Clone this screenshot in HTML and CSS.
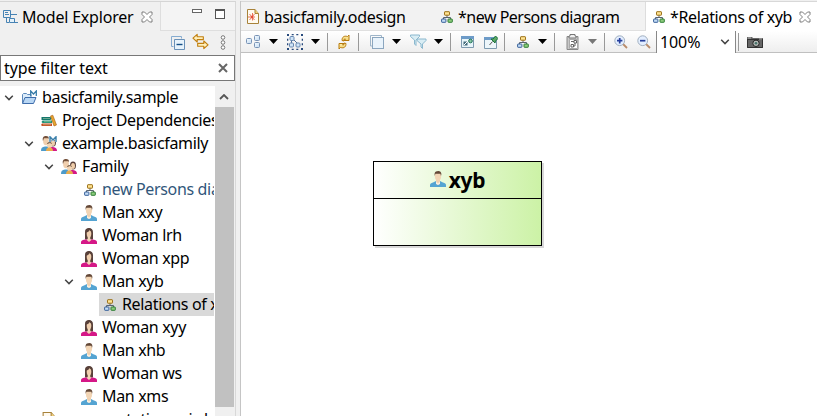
FILE: index.html
```
<!DOCTYPE html>
<html lang="en">
<head>
<meta charset="utf-8">
<title>Model Explorer</title>
<link rel="stylesheet" href="styles.css">
</head>
<body>
<svg class="defs" aria-hidden="true">
  <defs>
    <linearGradient id="blue" x1="0" y1="0" x2="1" y2="1"><stop offset="0" stop-color="#f5fbff"/><stop offset="1" stop-color="#c3dbf2"/></linearGradient>
    <linearGradient id="gold" x1="0" y1="0" x2="0" y2="1"><stop offset="0" stop-color="#fff3b5"/><stop offset="1" stop-color="#f3cf66"/></linearGradient>
  </defs>
  <symbol id="explorer" viewBox="0 0 16 16"><path d="M1.500 1.500h7v7h-7zM3 3.500h3M3 5.500h4M4.500 8.500v5H7M9 5.500h6" fill="none" stroke="#4783b4"/><path d="M7.500 9.500h5v4h-5zM12 13.500h4" fill="#e4f2fb" stroke="#4783b4"/></symbol>
  <symbol id="close" viewBox="0 0 12 12"><path d="M1 1h2.500L6 3.500 8.500 1H11v2.500L8.500 6 11 8.500V11H8.500L6 8.500 3.500 11H1V8.500L3.500 6 1 3.500z" fill="#fff" stroke="#707070" stroke-width=".9"/></symbol>
  <symbol id="collapse" viewBox="0 0 14 14"><path d="M.5 10.500V.5h10v2M.5 10.500h2" fill="none" stroke="#86acd0"/><path d="M3.500 3.500h10v10h-10z" fill="#e7f3fc" stroke="#6a91b8"/><path d="M5.500 8.500h6" stroke="#164f87" stroke-width="1.400"/></symbol>
  <symbol id="link" viewBox="0 0 18 18"><path d="M1 5.500 5.500 1.500V4H12v3H5.500v2.500zM17 12.500 12.500 8.500V11H6v3h6.500v2.500z" fill="#fff1bd" stroke="#c17f10" stroke-width="1.200" stroke-linejoin="round"/></symbol>
  <symbol id="dots" viewBox="0 0 6 15"><g fill="#fff" stroke="#777"><circle cx="3" cy="2.500" r="1.800"/><circle cx="3" cy="7.500" r="1.800"/><circle cx="3" cy="12.500" r="1.800"/></g></symbol>
  <symbol id="chev" viewBox="0 0 10 6"><path d="M1.200 .8 5 4.600 8.800 .8" fill="none" stroke="#444" stroke-width="1.500"/></symbol>
  <symbol id="project" viewBox="0 0 16 16"><path d="M1.500 13V4.500l1-1h3l1 1H10V8" fill="#dcecf9" stroke="#5c89bb"/><path d="M1.500 13.500 4 7.500h11l-2.500 6z" fill="#b9d7f4" stroke="#3f6dab"/><path d="M9.700 6V1l2.800 3 2.800-3v5" fill="none" stroke="#397da8" stroke-width="1.300"/></symbol>
  <symbol id="books" viewBox="0 0 16 16"><path d="M.5 4h9l1 1.500-1 1.500h-9z" fill="#15766c"/><path d="M1.500 7.500H11V10H1.500L.5 9z" fill="#1f9278"/><path d="M1 10.500h10V13H1l-1-1z" fill="#c94d21"/><path d="M2 5.500h7M3 8.700h7M2 11.700h8" stroke="#c5dcb1" stroke-width=".5"/><path d="m9.500 3 2.300-.8L15.500 12l-2.500 1z" fill="#e6a72d" stroke="#a55b17" stroke-width=".6"/></symbol>
  <symbol id="man" viewBox="0 0 16 16"><path d="M0 16v-2c0-1.300 1-2 3-2.500L6 10h4l3 1.500c2 .5 3 1.200 3 2.500v2z" fill="#55a4d2"/><path d="M6 8h4v2.500L8 14l-2-3.500z" fill="#efd0af"/><ellipse cx="8" cy="5.200" rx="3.100" ry="4.300" fill="#f2d5b5"/><path d="M4.600 5V2.500C5 .7 6.500 0 8.300 0c1.900 0 2.900 1.200 3.100 3L11 5l-.6-2.300H5.500z" fill="#634736"/><path d="m6 10.500 2 2 2-2V13l-2 1-2-1z" fill="#fff1df"/></symbol>
  <symbol id="woman" viewBox="0 0 16 16"><path d="M4 11.500V4C4 1 5.500 0 8 0s4 1.500 4 4.500v7z" fill="#59413a"/><path d="M0 16v-2c0-1.500 2-2.500 5-2.500h6c3 0 5 1 5 2.500v2z" fill="#d51887"/><ellipse cx="8" cy="5.700" rx="2.300" ry="3.600" fill="#f0cfae"/><path d="M6.700 8h2.600v3l1 1L8 14l-2.300-2 1-1z" fill="#f2d5b5"/><path d="M5 4.500c2 0 3-1 3.500-2.500L11 4.500V2L8 0 5 2z" fill="#59413a"/></symbol>
  <symbol id="family" viewBox="0 0 16 16"><path d="M0 15c0-3 1-4 4-4.500h3l2 4.500z" fill="#4d9bca"/><path d="M8 15v-4h4c3 .5 4 1.500 4 4z" fill="#d51887"/><ellipse cx="5" cy="5" rx="2.900" ry="4.200" fill="#f0cfae"/><path d="M2 5C1 1 3 0 5 0s3.500 1 2.800 3L7 2.200H3z" fill="#74513b"/><ellipse cx="12" cy="6.500" rx="3" ry="4" fill="#59413a"/><ellipse cx="12" cy="7" rx="2" ry="3" fill="#efcda9"/><ellipse cx="8.500" cy="9" rx="2.500" ry="3" fill="#f2d5b5"/><path d="M6 8c0-2.500 5-2.500 5 0L9 7z" fill="#654c3b"/><path d="M5 15c0-2.500 1.500-3.500 3.500-3.500S12 12.500 12 15z" fill="#e9ad4d"/></symbol>
  <symbol id="familym" viewBox="0 0 16 16"><use href="#family" width="16" height="16"/><path d="M9 6V.8L12 4l3-3.200V6" fill="none" stroke="#dcecf4" stroke-width="2.500"/><path d="M9 6V.8L12 4l3-3.200V6" fill="none" stroke="#397da8" stroke-width="1.300"/></symbol>
  <symbol id="diagram" viewBox="0 0 12 12"><path d="M6 4v2.500M2.500 8V6.500h7V8" fill="none" stroke="#59636d"/><rect x="3.500" y=".7" width="5" height="3.500" rx=".5" fill="#ffe391" stroke="#9b7018"/><rect x=".6" y="8" width="4.300" height="3.300" rx=".5" fill="#c4dcf5" stroke="#365f99"/><rect x="7" y="8" width="4.300" height="3.300" rx=".5" fill="#8ecc7d" stroke="#2d7d34"/></symbol>
  <symbol id="file" viewBox="0 0 12 15"><path d="M.5.5h7.500l3.500 4v10H.5z" fill="#fffaf0" stroke="#a88239"/><path d="M8 .5v4h3.500" fill="#f3d27d" stroke="#a88239"/></symbol>
  <symbol id="odesign" viewBox="0 0 12 15"><use href="#file" width="12" height="15"/><path d="M1 8h7M5.500 4v7.500M2.500 5l5 6M7.500 5l-5 6" stroke="#ea715b" stroke-width="1"/><circle cx="5" cy="8" r="1.300" fill="#e44c37"/></symbol>
  <symbol id="arrange" viewBox="0 0 16 14"><g fill="url(#blue)" stroke="#7893b5"><rect x=".5" y="3.500" width="5" height="5" rx="1"/><rect x="8.500" y=".5" width="5" height="5" rx="1"/><rect x="8.500" y="7.500" width="5" height="5" rx="1"/></g></symbol>
  <symbol id="select" viewBox="0 0 16 16"><g fill="#284a7c"><path d="M0 0h2v2H0zM4.700 0h2v1.300h-2zM9.300 0h2v1.300h-2zM14 0h2v2h-2zM0 4.700h1.300v2H0zM14.700 4.700H16v2h-1.300zM0 9.300h1.300v2H0zM14.700 9.300H16v2h-1.300zM0 14h2v2H0zM4.700 14.700h2V16h-2zM9.300 14.700h2V16h-2zM14 14h2v2h-2z"/></g><path d="m5 4 7 7M4.500 5v6" stroke="#527198"/><g fill="#cfe4f7" stroke="#6888b0"><rect x="3" y="2.500" width="4" height="4" rx="1"/><rect x="2.500" y="9" width="4" height="4" rx="1"/><rect x="9" y="9" width="4" height="4" rx="1"/></g></symbol>
  <symbol id="refresh" viewBox="0 0 16 16"><path d="M6 6.500C6 3 8 1.500 11.500 2.500L13 1v5.500H8L9.500 5C8.500 4.500 8 5 8 7z" fill="url(#gold)" stroke="#b77a0d" stroke-linejoin="round"/><path d="M10 9.500c0 3.500-2 5-5.500 4L3 15V9.500h5L6.500 11C7.500 11.500 8 11 8 9z" fill="url(#gold)" stroke="#b77a0d" stroke-linejoin="round"/></symbol>
  <symbol id="layers" viewBox="0 0 14 14"><path d="M.5 11V.5h11v2M.5 11h2" fill="none" stroke="#9eb5c9"/><rect x="2.500" y="2.500" width="11" height="11" fill="#e9f3fb" stroke="#8ba6bf"/></symbol>
  <symbol id="filter" viewBox="0 0 17 15"><g fill="#d9edf4" stroke="#8bb8ce"><path d="M.5 1h9v1.500L6 6v5.500L4.500 10V6L.5 2.500z"/><path d="M7 5h9v1.500L12.500 10v4.500L11 13v-3L7 6.500z"/></g></symbol>
  <symbol id="image" viewBox="0 0 13 12"><path d="M.5 1.500h12v10H.5z" fill="#e8f5fa" stroke="#7d9aaf"/><path d="M0 0h13v3H0z" fill="#6d9bc8"/><path d="M2.500 5.500h4v4h-4z" fill="#426a7a"/><path d="m3 9 4-4" stroke="#fff"/><circle cx="9.500" cy="5" r="1.800" fill="#8bc8a4" stroke="#1e7057"/></symbol>
  <symbol id="pin" viewBox="0 0 14 14"><path d="M.5 3.500h12v10H.5z" fill="#edf6fa" stroke="#7d9aaf"/><path d="M0 2h13v3H0z" fill="#6d9bc8"/><path d="m5.500 10 3-3.500" stroke="#555"/><path d="m7 4 4 4 .5-2L14 3.500 11.500 1 9 4z" fill="#5ca765" stroke="#19733b"/></symbol>
  <symbol id="paste" viewBox="0 0 13 16"><path d="M1 2.500h11v13H1z" fill="#c7c7c7" stroke="#888"/><path d="M4 2V.5h5V2h1v2H3V2z" fill="#eee" stroke="#777"/><path d="M3.500 5.500h8v9h-8z" fill="#fff" stroke="#aaa"/><path d="M5 10.500h2.500V13H5zM8 6.500h2.500V9H8zM5 7.500h3M9 9v3H7.500" fill="none" stroke="#666"/></symbol>
  <symbol id="plus" viewBox="0 0 14 14"><path d="m9 9 4 4" stroke="#b98b69" stroke-width="1.800"/><circle cx="5.700" cy="5.700" r="4.900" fill="#e3eeff" stroke="#a1afbf"/><path d="M3 5.700h5.400M5.700 3v5.400" stroke="#263f9c" stroke-width="1.700"/></symbol>
  <symbol id="minus" viewBox="0 0 14 14"><path d="m9 9 4 4" stroke="#b98b69" stroke-width="1.800"/><circle cx="5.700" cy="5.700" r="4.900" fill="#e3eeff" stroke="#a1afbf"/><path d="M3 5.700h5.400" stroke="#263f9c" stroke-width="1.700"/></symbol>
  <symbol id="camera" viewBox="0 0 16 12"><path d="M0 1h5l1 1h10v10H0z" fill="#666"/><path d="M0 3.500h16M.5 3v8.500h15V3" fill="none" stroke="#333"/><path d="M1 2h3M12 3h3" stroke="#b5b5b5"/><circle cx="9" cy="7.300" r="3.200" fill="#b5bab7" stroke="#222"/><circle cx="9" cy="7.300" r="1.300" fill="#477269"/></symbol>
</svg>

<main class="workbench">
  <aside class="explorer">
    <header class="view-tabs">
      <div class="view-tab"><svg class="i16"><use href="#explorer"/></svg><span class="view-title">Model Explorer</span><svg class="close"><use href="#close"/></svg></div>
      <div class="window-buttons"><i class="minimize"></i><i class="maximize"></i></div>
    </header>
    <div class="view-tools"><svg class="collapse"><use href="#collapse"/></svg><svg class="link"><use href="#link"/></svg><svg class="dots"><use href="#dots"/></svg></div>
    <div class="search"><span>type filter text</span><svg class="clear" viewBox="0 0 10 10"><path d="m1 1 8 8M9 1 1 9" stroke="#666" stroke-width="2"/></svg></div>
    <div class="tree-area">
      <div class="tree">
        <div class="row l0"><svg class="chev"><use href="#chev"/></svg><svg class="i16"><use href="#project"/></svg><span>basicfamily.sample</span></div>
        <div class="row l1"><i class="chev"></i><svg class="i16"><use href="#books"/></svg><span>Project Dependencies</span></div>
        <div class="row l1"><svg class="chev"><use href="#chev"/></svg><svg class="i16"><use href="#familym"/></svg><span>example.basicfamily</span></div>
        <div class="row l2"><svg class="chev"><use href="#chev"/></svg><svg class="i16"><use href="#family"/></svg><span>Family</span></div>
        <div class="row l3 representation"><i class="chev"></i><svg class="i16 small"><use href="#diagram"/></svg><span>new Persons diagram</span></div>
        <div class="row l3"><i class="chev"></i><svg class="i16"><use href="#man"/></svg><span>Man xxy</span></div>
        <div class="row l3"><i class="chev"></i><svg class="i16"><use href="#woman"/></svg><span>Woman lrh</span></div>
        <div class="row l3"><i class="chev"></i><svg class="i16"><use href="#woman"/></svg><span>Woman xpp</span></div>
        <div class="row l3"><svg class="chev"><use href="#chev"/></svg><svg class="i16"><use href="#man"/></svg><span>Man xyb</span></div>
        <div class="row selected"><svg class="i16 small"><use href="#diagram"/></svg><span>Relations of xyb</span></div>
        <div class="row l3"><i class="chev"></i><svg class="i16"><use href="#woman"/></svg><span>Woman xyy</span></div>
        <div class="row l3"><i class="chev"></i><svg class="i16"><use href="#man"/></svg><span>Man xhb</span></div>
        <div class="row l3"><i class="chev"></i><svg class="i16"><use href="#woman"/></svg><span>Woman ws</span></div>
        <div class="row l3"><i class="chev"></i><svg class="i16"><use href="#man"/></svg><span>Man xms</span></div>
        <div class="row l1"><i class="chev"></i><svg class="i16 page"><use href="#file"/></svg><span>representations.aird</span></div>
      </div>
      <div class="scrollbar"><svg class="up" viewBox="0 0 10 6"><path d="M1 5 5 1l4 4" fill="none" stroke="#555" stroke-width="1.800"/></svg><div class="thumb"></div></div>
    </div>
  </aside>

  <section class="editor">
    <nav class="editor-tabs">
      <div class="tab tab-one"><svg class="doc"><use href="#odesign"/></svg><span>basicfamily.odesign</span></div>
      <div class="tab tab-two"><svg class="dia"><use href="#diagram"/></svg><span>*new Persons diagram</span></div>
      <div class="tab active"><svg class="dia"><use href="#diagram"/></svg><span>*Relations of xyb</span><svg class="close"><use href="#close"/></svg></div>
    </nav>
    <div class="toolbar">
      <svg class="t-arrange"><use href="#arrange"/></svg><i class="drop d1"></i>
      <svg class="t-select"><use href="#select"/></svg><i class="drop d2"></i><i class="sep s1"></i>
      <svg class="t-refresh"><use href="#refresh"/></svg><i class="sep s2"></i>
      <svg class="t-layers"><use href="#layers"/></svg><i class="drop d3"></i>
      <svg class="t-filter"><use href="#filter"/></svg><i class="drop d4"></i><i class="sep s3"></i>
      <svg class="t-image"><use href="#image"/></svg><svg class="t-pin"><use href="#pin"/></svg><i class="sep s4"></i>
      <svg class="t-diagram"><use href="#diagram"/></svg><i class="drop d5"></i><i class="sep s5"></i>
      <svg class="t-paste"><use href="#paste"/></svg><i class="drop d6"></i><i class="sep s6"></i>
      <svg class="t-plus"><use href="#plus"/></svg><svg class="t-minus"><use href="#minus"/></svg>
      <div class="zoom"><span>100%</span><svg class="zoom-arrow"><use href="#chev"/></svg></div><i class="sep s7"></i>
      <svg class="t-camera"><use href="#camera"/></svg>
    </div>
    <div class="canvas">
      <article class="node"><header><svg class="i16"><use href="#man"/></svg><b>xyb</b></header><div class="node-body"></div></article>
    </div>
  </section>
</main>
</body>
</html>
```
FILE: styles.css
```
* { box-sizing: border-box; }
body { margin: 0; background: #f0f0f0; color: #000; font: 16px/22px "Noto Sans", "Open Sans", sans-serif; letter-spacing: -.45px; }
.defs { position: absolute; width: 0; height: 0; }
svg, i { display: block; flex: none; }
span { white-space: nowrap; }
.workbench { display: flex; width: 817px; height: 416px; overflow: hidden; padding-top: 1px; }
.explorer { display: flex; flex-direction: column; width: 236px; flex: none; border-right: 1px solid #d8d8d8; border-top: 1px solid #d5d5d5; }
.view-tabs { display: flex; height: 29px; flex: none; }
.view-tab { display: flex; align-items: center; width: 160px; padding: 1px 0 0 2px; }
.view-title { width: 119px; padding-left: 4px; letter-spacing: -.2px; }
.close { width: 12px; height: 12px; }
.view-tab .close { margin-left: 4px; margin-top: -1px; }
.window-buttons { display: flex; flex: 1; padding: 7px 0 0 31px; gap: 13px; background: #f4f4f4; border-left: 1px solid #dedede; border-bottom: 1px solid #dedede; }
.minimize { width: 10px; height: 4px; border: 1px solid #666; background: #fff; }
.maximize { width: 10px; height: 10px; border: 1px solid #555; border-top-width: 2px; background: #fff; }
.view-tools { display: flex; height: 24px; flex: none; padding: 5px 0 0 171px; }
.collapse { width: 14px; height: 14px; }
.link { width: 17px; height: 17px; margin: -3px 0 0 7px; }
.dots { width: 6px; height: 15px; margin: -1px 0 0 11px; }
.search { display: flex; align-items: center; justify-content: space-between; height: 26px; flex: none; padding: 0 6px 0 3px; border: 1px solid #777; background: #fff; }
.search span { letter-spacing: -.08px; }
.clear { width: 10px; height: 10px; }
.tree-area { display: flex; flex: 1; min-height: 0; margin-top: 5px; }
.tree { width: 214px; overflow: hidden; background: #fff; flex: none; letter-spacing: -.34px; }
.row { display: flex; align-items: center; height: 23px; overflow: hidden; }
.row .i16 { margin: 0 5px 0 7px; }
.row span { margin-top: -1px; }
.row .chev { width: 10px; height: 6px; }
.i16 { width: 16px; height: 16px; }
.l0 { padding-left: 4px; }
.l1 { padding-left: 24px; }
.l2 { padding-left: 44px; }
.l3 { padding-left: 64px; }
.row .small { width: 12px; height: 12px; margin-left: 10px; margin-right: 6px; }
.representation { color: #31567a; }
.selected { margin-left: 99px; background: #d9d9d9; }
.row.selected .small { margin: 0 6px 0 5px; }
.scrollbar { width: 21px; background: #f0f0f0; border-left: 1px solid #fff; }
.up { width: 10px; height: 6px; margin: 8px 0 7px 4px; }
.thumb { width: 19px; height: 300px; background: #c1c1c1; }
.editor { display: flex; flex-direction: column; width: 577px; margin-left: 4px; flex: none; border-left: 1px solid #c5c5c5; }
.editor-tabs { display: flex; height: 30px; flex: none; background: #f2f2f2; border-top: 1px solid #d8d8d8; border-bottom: 1px solid #e0e0e0; }
.tab { display: flex; align-items: center; padding: 1px 0 0; }
.tab-one { width: 194px; padding-left: 6px; letter-spacing: -.33px; }
.tab-two { width: 210px; padding-left: 6px; letter-spacing: -.5px; }
.active { width: 172px; height: 29px; padding-left: 7px; border-left: 1px solid #ddd; background: #fff; letter-spacing: -.35px; }
.doc { width: 12px; height: 15px; margin-right: 5px; }
.dia { width: 12px; height: 12px; margin-right: 5px; }
.active .close { margin-left: auto; margin-right: 6px; margin-top: -1px; }
.toolbar { display: flex; align-items: center; height: 22px; flex: none; background: linear-gradient(#fff, #eee); border-bottom: 1px solid #c0c0c0; }
.drop { width: 9px; height: 5px; background: #000; clip-path: polygon(0 0, 100% 0, 50% 100%); }
.sep { width: 1px; height: 18px; background: #999; }
.t-arrange { width: 16px; height: 14px; margin-left: 5px; }
.d1 { margin-left: 7px; }
.t-select { width: 16px; height: 16px; margin-left: 9px; }
.d2 { margin-left: 8px; }
.s1 { margin-left: 7px; }
.t-refresh { width: 16px; height: 16px; margin-left: 8px; }
.s2 { margin-left: 6px; }
.t-layers { width: 14px; height: 14px; margin-left: 11px; }
.d3 { margin-left: 8px; }
.t-filter { width: 17px; height: 15px; margin-left: 9px; }
.d4 { margin-left: 7px; }
.s3 { margin-left: 7px; }
.t-image { width: 13px; height: 12px; margin-left: 10px; }
.t-pin { width: 14px; height: 14px; margin-left: 10px; }
.s4 { margin-left: 6px; }
.t-diagram { width: 12px; height: 12px; margin-left: 12px; }
.d5 { margin-left: 9px; }
.s5 { margin-left: 7px; }
.t-paste { width: 13px; height: 16px; margin-left: 11px; }
.d6 { margin-left: 9px; background: #777; }
.s6 { margin-left: 7px; }
.t-plus { width: 14px; height: 14px; margin-left: 9px; }
.t-minus { width: 14px; height: 14px; margin-left: 9px; }
.zoom { display: flex; align-items: center; justify-content: space-between; width: 80px; height: 22px; margin-left: 5px; padding: 0 5px 0 3px; border-left: 1px solid #888; border-right: 1px solid #888; background: #fff; }
.zoom span { letter-spacing: -.1px; }
.zoom-arrow { width: 10px; height: 6px; }
.s7 { margin-left: 2px; }
.t-camera { width: 16px; height: 12px; margin-left: 8px; }
.canvas { flex: 1; padding: 108px 0 0 132px; background: #fff; }
.node { width: 169px; height: 85px; border: 1px solid #000; background: linear-gradient(90deg, #fff, #ccf2a6); box-shadow: 2px 2px 0 #d8d8d8; }
.node header { display: flex; align-items: center; justify-content: center; gap: 3px; height: 37px; border-bottom: 1px solid #000; }
.node header .i16 { margin-top: -2px; }
.node header b { margin-top: -1px; font-size: 21px; letter-spacing: -.3px; }
```
